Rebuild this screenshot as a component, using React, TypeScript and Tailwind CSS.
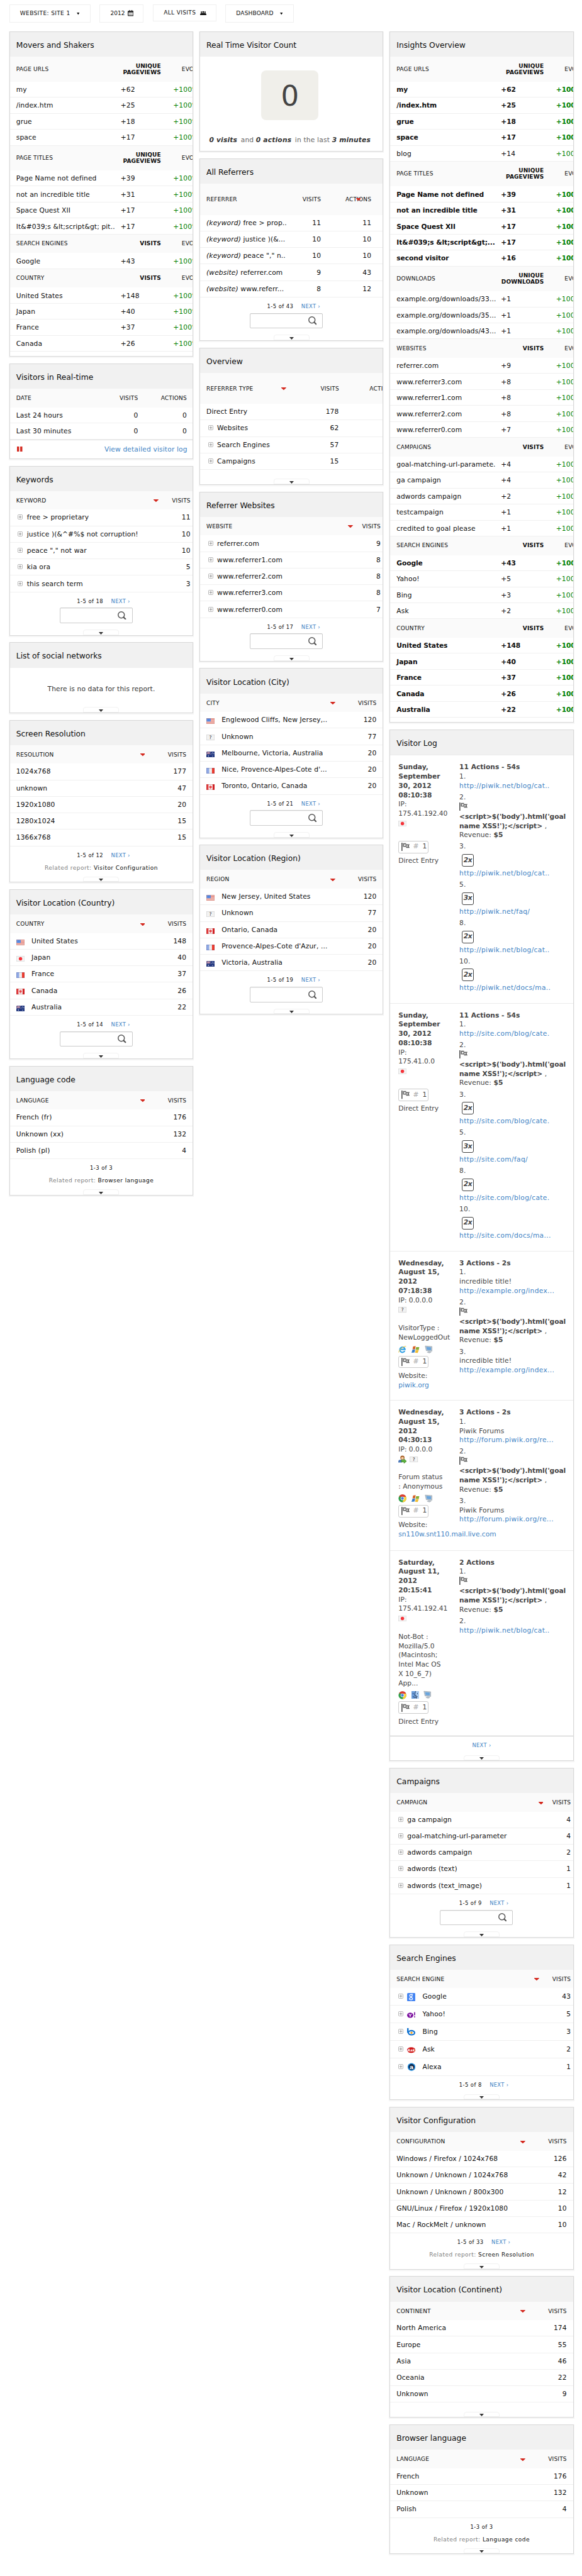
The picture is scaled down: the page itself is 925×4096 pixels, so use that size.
import React from "react";

type Bold = 0 | 1;

function Card({ title, children }: { title: string; children: React.ReactNode }) {
  return (
    <section className="relative w-[292.4px] overflow-hidden border border-[#d8d8d8] bg-white shadow-[0_1px_1px_1px_rgba(0,0,0,0.04)]">
      <h2 className="flex h-[39.24px] items-center bg-[#f1f1f1] pt-[3px] pl-[10px] text-[12.32px] leading-[16px] tracking-[-0.03px] whitespace-nowrap text-[#0d0d0d]">
        {title}
      </h2>
      {children}
    </section>
  );
}

function Tab() {
  return (
    <div className="absolute bottom-0 left-1/2 ml-[-28.5px] flex h-[8.5px] w-[57px] justify-center rounded-t-[4px] border border-[#f2f2f2] pt-[2.5px]">
      <svg className="h-[4px] w-[7px]" viewBox="0 0 7 4">
        <path d="M0 0h7L3.5 4z" fill="#333" />
      </svg>
    </div>
  );
}

function Arrow() {
  return (
    <svg className="h-[4.4px] w-[7.8px] shrink-0" viewBox="0 0 9 5">
      <path d="M0 0h9v.8L4.5 5 0 .8z" fill="#d4291f" />
    </svg>
  );
}

function Plus() {
  return (
    <svg className="mr-[6.4px] ml-[2.6px] h-[8px] w-[8px] shrink-0 -translate-y-[1px]" viewBox="0 0 9 9" fill="none" stroke="#aaa">
      <rect x=".5" y=".5" width="8" height="8" rx="1.5" />
      <path d="M2 4.5h5M4.5 2v5" stroke="#888" />
    </svg>
  );
}

function Flag({ code }: { code: string }) {
  return (
    <svg className="h-[9.2px] w-[13.2px] shrink-0" viewBox="0 0 16 11">
      {code === "us" && (
        <g>
          <rect width="16" height="11" fill="#f6f0ee" />
          <path d="M0 .8h16M0 3h16M0 5.3h16M0 7.6h16M0 10h16" stroke="#e0584c" strokeWidth="1.1" />
          <rect width="8.5" height="6.2" fill="#3f78dc" />
          <path d="M1 1.8h7M1 4.2h7" stroke="#c8dafa" strokeWidth=".9" strokeDasharray="1 1" />
          <rect x=".5" y=".5" width="15" height="10" fill="none" stroke="#c98a80" strokeOpacity=".6" />
        </g>
      )}
      {code === "jp" && (
        <g>
          <rect x=".5" y=".5" width="15" height="10" fill="#f4f4f4" stroke="#dcdcdc" />
          <circle cx="8" cy="5.5" r="3.3" fill="#f5333a" />
        </g>
      )}
      {code === "fr" && (
        <g>
          <rect width="16" height="11" fill="#eeeeee" />
          <rect width="5.4" height="11" fill="#8fa9e6" />
          <rect x="10.8" width="5.2" height="11" fill="#ee3a2c" />
          <rect x=".5" y=".5" width="15" height="10" fill="none" stroke="#444c88" strokeOpacity=".35" />
        </g>
      )}
      {code === "ca" && (
        <g>
          <rect width="16" height="11" fill="#f4f0f0" />
          <rect width="4" height="11" fill="#e03a3c" />
          <rect x="12" width="4" height="11" fill="#d42225" />
          <path d="M8 2l1 1.5 1.6-.2-.5 2.2 1 .6L8.3 8v1h-.6V8L4.9 6.1l1-.6-.5-2.2L7 3.500z" fill="#e8484a" />
          <rect x=".5" y=".5" width="15" height="10" fill="none" stroke="#b02a2a" strokeOpacity=".4" />
        </g>
      )}
      {code === "au" && (
        <g>
          <rect width="16" height="11" fill="#22387f" />
          <path d="M0 0l8 5.5M8 0L0 5.5M4 0v5.5M0 2.7h8" stroke="#d8a0ac" strokeWidth="1.1" />
          <circle cx="4" cy="8.5" r="1" fill="#dfe4f5" />
          <path d="M12 1.5v1.5M10 4.5h1.5M13.5 4h1.5M12 8v1.5" stroke="#dfe4f5" strokeWidth="1.2" />
        </g>
      )}
      {code === "xx" && (
        <g>
          <rect x=".5" y=".5" width="15" height="10" fill="#f3f3f3" stroke="#d5d5d5" />
          <text x="8" y="9" fontSize="9" textAnchor="middle" fill="#222" fontFamily="DejaVu Sans">
            ?
          </text>
        </g>
      )}
    </svg>
  );
}

function Engine({ name }: { name: string }) {
  return (
    <svg className="mr-[11px] h-[13.2px] w-[13.2px] shrink-0" viewBox="0 0 16 16">
      {name === "Google" && (
        <g fill="none" stroke="#fff" strokeWidth="1.5">
          <rect width="16" height="16" rx="2" fill="#4585f2" stroke="none" />
          <circle cx="7.5" cy="5" r="2.3" />
          <path d="M8.5 2.7h2.5M8 7.3c-1 1 2.5 1.5 2.5 3.7 0 3-6 3-6 .3 0-2 2-2.5 4-2.3" />
        </g>
      )}
      {name === "Yahoo!" && (
        <g>
          <ellipse cx="6" cy="9" rx="6" ry="5" fill="#7b0f9e" />
          <path d="M3.5 6.5L6 9.5l2.5-3M6 9.5V12" stroke="#fff" strokeWidth="1.5" fill="none" />
          <path d="M14.5 3v6M14.5 11v2" stroke="#7b0f9e" strokeWidth="2" />
        </g>
      )}
      {name === "Bing" && (
        <g>
          <path d="M1.5 1v9" stroke="#1273d0" strokeWidth="3" />
          <ellipse cx="8.5" cy="10" rx="6" ry="4" fill="#fff" stroke="#1273d0" strokeWidth="2.6" />
          <circle cx="8.5" cy="10" r="2" fill="#f7a21b" />
        </g>
      )}
      {name === "Ask" && (
        <g>
          <ellipse cx="8" cy="9.5" rx="8" ry="5.5" fill="#cf1414" />
          <text x="8" y="12" fontSize="7" fontWeight="bold" fontStyle="italic" textAnchor="middle" fill="#fff" fontFamily="DejaVu Sans">
            Ask
          </text>
        </g>
      )}
      {name === "Alexa" && (
        <g>
          <circle cx="8.5" cy="8" r="7.5" fill="#1f87d6" />
          <circle cx="8.5" cy="8" r="5.5" fill="#0b2346" />
          <text x="8.5" y="12" fontSize="11" fontWeight="bold" textAnchor="middle" fill="#fff" fontFamily="DejaVu Sans">
            a
          </text>
        </g>
      )}
    </svg>
  );
}

/* ---------- insights style tables ---------- */

type Group = { head: string; metric: string[]; rows: [string, string, Bold?][] };

function Insights({ groups, wide }: { groups: Group[]; wide?: boolean }) {
  return (
    <div className="pb-[7.2px] whitespace-nowrap">
      {groups.map((g) => (
        <div key={g.head}>
          <div
            className={
              "flex items-center bg-[#fafafa] pt-[1px] pl-[10px] text-[9.04px] leading-[9.86px] tracking-[0.15px] text-[#0d0d0d] uppercase " +
              (g.metric.length > 1 ? "h-[39.42px]" : "h-[29.56px]")
            }
          >
            <div className="w-[120px] shrink-0">{g.head}</div>
            <div className={"shrink-0 text-right font-bold tracking-[0.1px] " + (wide ? "w-[114px]" : "w-[110px]")}>
              {g.metric.map((m) => (
                <div key={m}>{m}</div>
              ))}
            </div>
            <div className="shrink-0 pl-[33px]">Evolution</div>
          </div>
          {g.rows.map(([label, value, bold]) => (
            <div
              key={label}
              className={
                "flex h-[25.46px] items-center border-b border-[#f0f0f0] pt-[2px] pl-[10px] text-[10.68px] leading-[14px] " +
                (bold ? "font-bold tracking-[-0.1px]" : "tracking-[0.12px]")
              }
            >
              <div className="w-[166px] shrink-0 text-[#0d0d0d]">{label}</div>
              <div className={"shrink-0 text-[#0d0d0d] " + (wide ? "w-[87.5px]" : "w-[83.5px]")}>{value}</div>
              <div className="shrink-0 text-[#008000]">+100%</div>
            </div>
          ))}
        </div>
      ))}
    </div>
  );
}

/* ---------- plain report tables ---------- */

type Row = { label: React.ReactNode; value: string; icon?: string; plus?: boolean };

function Report({
  head,
  rows,
  tight,
  arrowGap = "mr-[36.5px]",
}: {
  head: string;
  rows: Row[];
  tight?: boolean;
  arrowGap?: string;
}) {
  return (
    <div className="whitespace-nowrap text-[#0d0d0d]">
      <div className={"flex h-[29.56px] items-center bg-[#fafafa] pt-[2px] pl-[10px] text-[9.04px] tracking-[0.15px] uppercase " + (tight ? "pr-[3.5px]" : "pr-[10px]")}>
        <div className="flex-1">{head}</div>
        <div className={arrowGap}>
          <Arrow />
        </div>
        <div>Visits</div>
      </div>
      {rows.map((r, i) => (
        <div
          key={i}
          className={
            "flex items-center border-b border-[#f0f0f0] pt-[1px] pl-[10px] text-[10.68px] leading-[14px] tracking-[0.12px] " +
            (tight ? "pr-[3.5px] " : "pr-[10px] ") +
            (r.plus && r.icon ? "h-[27.92px]" : "h-[26.28px]")
          }
        >
          {r.plus && <Plus />}
          {r.icon && !r.plus && (
            <div className="mr-[11px] pt-[3px]">
              <Flag code={r.icon} />
            </div>
          )}
          {r.icon && r.plus && <Engine name={r.icon} />}
          <div className="flex-1">{r.label}</div>
          <div>{r.value}</div>
        </div>
      ))}
    </div>
  );
}

function Pager({ text, next = true }: { text: string; next?: boolean }) {
  return (
    <div className={"flex h-[28px] items-center justify-center text-[8.4px] leading-[10px] " + (next ? "pl-[7px]" : "")}>
      <span className="tracking-[0.45px] text-[#0d0d0d]">{text}</span>
      {next && <span className="ml-[12.5px] tracking-[0.3px] text-[#4183c4] uppercase">Next ›</span>}
    </div>
  );
}

function SearchFooter({ text }: { text: string }) {
  return (
    <div className="h-[68px]">
      <Pager text={text} />
      <div className="mt-[-3.3px] ml-[79px] flex h-[24.6px] w-[115.8px] items-center justify-end rounded-[2px] border border-[#ccc] pr-[9px] shadow-[inset_0_1px_1px_rgba(0,0,0,0.06)]">
        <svg className="h-[13.2px] w-[13.2px]" viewBox="0 0 16 16" fill="none" stroke="#555">
          <circle cx="7" cy="7" r="6" strokeWidth="1.8" />
          <path d="M11.5 11.5l3.5 3.5" strokeWidth="2.6" strokeLinecap="round" />
        </svg>
      </div>
      <Tab />
    </div>
  );
}

function RelatedFooter({ text, next, related }: { text: string; next?: boolean; related: string }) {
  return (
    <div className="h-[56.5px]">
      <Pager text={text} next={!!next} />
      <div className="-mt-[1px] text-center text-[9.04px] leading-[14px] tracking-[0.45px] text-[#808080]">
        Related report: <span className="text-[#0d0d0d]">{related}</span>
      </div>
      <Tab />
    </div>
  );
}

/* ---------- visitor log ---------- */

function GoalIcon() {
  return (
    <svg className="h-[13.2px] w-[13.2px] shrink-0" viewBox="0 0 16 16">
      <path d="M0 0h2v16H0z" fill="#555" />
      <path d="M3 1h6v2h7l-2 3.5 2 3.5H9V8H3z" fill="#666" />
      <path d="M5 3h3v3H5zM10 5h2v3h-2z" fill="#fff" />
    </svg>
  );
}

function Chrome() {
  return (
    <svg className="h-[13.2px] w-[13.2px]" viewBox="0 0 16 16">
      <circle cx="8" cy="8" r="7.5" fill="#2e9e48" />
      <path d="M1.5 4.2A7.5 7.5 0 0 1 15 5H8z" fill="#df3b2e" />
      <path d="M15 5a7.5 7.5 0 0 1-7 10.5L11 8 8 5z" fill="#fbd03c" />
      <circle cx="8" cy="8" r="3.5" fill="#fff" />
      <circle cx="8" cy="8" r="2.7" fill="#4a83dc" />
    </svg>
  );
}

function Explorer() {
  return (
    <svg className="h-[13.2px] w-[13.2px]" viewBox="0 0 16 16" fill="none">
      <path d="M12.5 11A5 5 0 1 1 13 8H4" stroke="#36a3e6" strokeWidth="2.6" />
      <path d="M1 14c-1-3 7-12 14-12" stroke="#f2c230" strokeWidth="1.2" />
    </svg>
  );
}

function WindowsLogo() {
  return (
    <svg className="h-[12px] w-[13.2px]" viewBox="0 0 16 14">
      <path d="M3 1l5-1-1 6-5 .5z" fill="#d8632b" />
      <path d="M9 2l6 0-1 5.5-6-.5z" fill="#86ad35" />
      <path d="M2 7l5-.5-1 6-6 .5z" fill="#3b7fc8" />
      <path d="M8 7.5l6 .5-2 5.5-5-.5z" fill="#f0bd33" />
    </svg>
  );
}

function Finder() {
  return (
    <svg className="h-[12px] w-[12px]" viewBox="0 0 14 14">
      <rect width="14" height="14" fill="#6b9ddb" />
      <rect x="7.5" width="6.5" height="14" fill="#a8caef" />
      <path d="M8 0C6 4 6 7 6 8h2.500c0 2 .3 4 .8 6M3 3.5v2M11 3.5v2M2.5 10c3 2 6 2 9 0" stroke="#14284b" fill="none" />
    </svg>
  );
}

function Screen() {
  return (
    <svg className="h-[14px] w-[13.2px]" viewBox="0 0 16 16">
      <path d="M1 1l13 1v9l-11-1z" fill="#c3ccd4" stroke="#8d98a3" strokeWidth=".8" />
      <path d="M2.8 2.500l9.500.8v6l-8-.6z" fill="#6aa5dc" />
      <path d="M7 11l4 .3 2 2.2-4 1.5-5-1.500z" fill="#b4bcc4" />
    </svg>
  );
}

function UserIcon() {
  return (
    <svg className="h-[13.2px] w-[13.2px]" viewBox="0 0 16 16">
      <circle cx="8" cy="4.5" r="4" fill="#a65f28" />
      <circle cx="8" cy="5.5" r="2.5" fill="#f7cfa4" />
      <path d="M0 13c0-4 3-5 7-4v5H0z" fill="#4d79b8" />
      <path d="M6 9h5V7l5 4.5-5 4V13H6z" fill="#5bb23c" stroke="#2f7b1e" strokeWidth=".7" />
    </svg>
  );
}

function GoalBox() {
  return (
    <div className="mb-[5.5px] flex h-[19.7px] w-[47.5px] items-center rounded-[3px] border border-[#ccc] pl-[4px]">
      <GoalIcon />
      <span className="ml-[5px] text-[#aaa]">#</span>
      <span className="ml-[6px]">1</span>
    </div>
  );
}

const Link = ({ children }: { children: React.ReactNode }) => <div className="text-[#4183c4]">{children}</div>;

type Action =
  | { n: string; kind: "link"; title?: string; url: string; times?: string }
  | { n: string; kind: "goal" };

function Actions({ title, items }: { title: string; items: Action[] }) {
  return (
    <div>
      <div className="font-bold">{title}</div>
      {items.map((a) => (
        <div key={a.n} className="mb-[3.3px]">
          <div className="tracking-[0.2px]">{a.n}.</div>
          {a.kind === "goal" ? (
            <div>
              <div className="flex h-[16px]">
                <GoalIcon />
              </div>
              <div className="font-bold tracking-[-0.07px]">
                <div>{"<script>$('body').html('goal"}</div>
                <div>
                  {"name XSS!');</script>"} <span className="font-normal">,</span>
                </div>
              </div>
              <div className="tracking-[0.1px]">
                Revenue: <b>$5</b>
              </div>
            </div>
          ) : (
            <div>
              {a.times && (
                <div className="flex h-[27.9px] items-center pl-[4px]">
                  <span className="flex h-[20px] w-[19px] items-center justify-center rounded-[3px] border border-[#444] font-bold tracking-[-0.3px] italic">
                    {a.times}
                  </span>
                </div>
              )}
              {a.title && <div className="tracking-[0.12px]">{a.title}</div>}
              <div className="tracking-[0.32px]">
                <Link>{a.url}</Link>
              </div>
            </div>
          )}
        </div>
      ))}
    </div>
  );
}

function Entry({
  height,
  date,
  ip,
  badges,
  extra,
  icons,
  source,
  children,
}: {
  height: string;
  date: string[];
  ip: string[];
  badges: React.ReactNode;
  extra?: string[];
  icons?: React.ReactNode;
  source: React.ReactNode;
  children: React.ReactNode;
}) {
  return (
    <div className={"flex border-t border-[#ececec] pt-[12px] pl-[13px] text-[10.68px] leading-[14.78px] whitespace-nowrap text-[#444] " + height}>
      <div className="w-[96.8px] shrink-0">
        <div className="font-bold">
          {date.map((d) => (
            <div key={d}>{d}</div>
          ))}
        </div>
        {ip.map((d) => (
          <div key={d}>{d}</div>
        ))}
        <div className="flex h-[15px] items-center gap-[5px]">{badges}</div>
        {extra ? (
          <div className="pt-[14.5px]">
            {extra.map((d) => (
              <div key={d}>{d}</div>
            ))}
            <div className="flex h-[21px] items-center gap-[7.5px] pt-[1px]">{icons}</div>
          </div>
        ) : (
          <div className="h-[20px]" />
        )}
        <GoalBox />
        {source}
      </div>
      {children}
    </div>
  );
}

const sundayActions = (a: string, b: string, c: string): Action[] => [
  { n: "1", kind: "link", url: a },
  { n: "2", kind: "goal" },
  { n: "3", kind: "link", url: a, times: "2x" },
  { n: "5", kind: "link", url: b, times: "3x" },
  { n: "8", kind: "link", url: a, times: "2x" },
  { n: "10", kind: "link", url: c, times: "2x" },
];

const titledActions = (title: string, url: string): Action[] => [
  { n: "1", kind: "link", title, url },
  { n: "2", kind: "goal" },
  { n: "3", kind: "link", title, url },
];

function VisitorLog() {
  return (
    <Card title="Visitor Log">
      <Entry
        height="h-[394.18px]"
        date={["Sunday,", "September", "30, 2012", "08:10:38"]}
        ip={["IP:", "175.41.192.40"]}
        badges={<Flag code="jp" />}
        source="Direct Entry"
      >
        <Actions title="11 Actions - 54s" items={sundayActions("http://piwik.net/blog/cat..", "http://piwik.net/faq/", "http://piwik.net/docs/ma..")} />
      </Entry>
      <Entry
        height="h-[394.18px]"
        date={["Sunday,", "September", "30, 2012", "08:10:38"]}
        ip={["IP:", "175.41.0.0"]}
        badges={<Flag code="jp" />}
        source="Direct Entry"
      >
        <Actions title="11 Actions - 54s" items={sundayActions("http://site.com/blog/cate.", "http://site.com/faq/", "http://site.com/docs/ma...")} />
      </Entry>
      <Entry
        height="h-[237.3px]"
        date={["Wednesday,", "August 15,", "2012", "07:18:38"]}
        ip={["IP: 0.0.0.0"]}
        badges={<Flag code="xx" />}
        extra={["VisitorType :", "NewLoggedOut"]}
        icons={
          <>
            <Explorer />
            <WindowsLogo />
            <Screen />
          </>
        }
        source={
          <>
            Website:
            <Link>piwik.org</Link>
          </>
        }
      >
        <Actions title="3 Actions - 2s" items={titledActions("incredible title!", "http://example.org/index...")} />
      </Entry>
      <Entry
        height="h-[238.6px]"
        date={["Wednesday,", "August 15,", "2012", "04:30:13"]}
        ip={["IP: 0.0.0.0"]}
        badges={
          <>
            <UserIcon />
            <Flag code="xx" />
          </>
        }
        extra={["Forum status", ": Anonymous"]}
        icons={
          <>
            <Chrome />
            <WindowsLogo />
            <Screen />
          </>
        }
        source={
          <>
            Website:
            <Link>sn110w.snt110.mail.live.com</Link>
          </>
        }
      >
        <Actions title="3 Actions - 2s" items={titledActions("Piwik Forums", "http://forum.piwik.org/re...")} />
      </Entry>
      <Entry
        height="h-[296.9px]"
        date={["Saturday,", "August 11,", "2012", "20:15:41"]}
        ip={["IP:", "175.41.192.41"]}
        badges={<Flag code="jp" />}
        extra={["Not-Bot :", "Mozilla/5.0", "(Macintosh;", "Intel Mac OS", "X 10_6_7)", "App..."]}
        icons={
          <>
            <Chrome />
            <Finder />
            <Screen />
          </>
        }
        source="Direct Entry"
      >
        <Actions
          title="2 Actions"
          items={[
            { n: "1", kind: "goal" },
            { n: "2", kind: "link", url: "http://piwik.net/blog/cat.." },
          ]}
        />
      </Entry>
      <div className="h-[37.6px] shadow-[0_-1px_1px_#ccc]">
        <div className="flex h-[28px] items-center justify-center text-[8.4px] tracking-[0.3px] text-[#4183c4] uppercase">Next ›</div>
        <Tab />
      </div>
    </Card>
  );
}

/* ---------- data ---------- */

const UPV = ["Unique", "Pageviews"];

const movers: Group[] = [
  { head: "Page URLs", metric: UPV, rows: [["my", "+62"], ["/index.htm", "+25"], ["grue", "+18"], ["space", "+17"]] },
  {
    head: "Page Titles",
    metric: UPV,
    rows: [["Page Name not defined", "+39"], ["not an incredible title", "+31"], ["Space Quest XII", "+17"], ["It&#039;s &lt;script&gt; pit..", "+17"]],
  },
  { head: "Search Engines", metric: ["Visits"], rows: [["Google", "+43"]] },
  { head: "Country", metric: ["Visits"], rows: [["United States", "+148"], ["Japan", "+40"], ["France", "+37"], ["Canada", "+26"]] },
];

const insights: Group[] = [
  { head: "Page URLs", metric: UPV, rows: [["my", "+62", 1], ["/index.htm", "+25", 1], ["grue", "+18", 1], ["space", "+17", 1], ["blog", "+14"]] },
  {
    head: "Page Titles",
    metric: UPV,
    rows: [
      ["Page Name not defined", "+39", 1],
      ["not an incredible title", "+31", 1],
      ["Space Quest XII", "+17", 1],
      ["It&#039;s &lt;script&gt;...", "+17", 1],
      ["second visitor", "+16", 1],
    ],
  },
  {
    head: "Downloads",
    metric: ["Unique", "Downloads"],
    rows: [["example.org/downloads/33...", "+1"], ["example.org/downloads/35...", "+1"], ["example.org/downloads/43...", "+1"]],
  },
  {
    head: "Websites",
    metric: ["Visits"],
    rows: [["referrer.com", "+9"], ["www.referrer3.com", "+8"], ["www.referrer1.com", "+8"], ["www.referrer2.com", "+8"], ["www.referrer0.com", "+7"]],
  },
  {
    head: "Campaigns",
    metric: ["Visits"],
    rows: [["goal-matching-url-paramete.", "+4"], ["ga campaign", "+4"], ["adwords campaign", "+2"], ["testcampaign", "+1"], ["credited to goal please", "+1"]],
  },
  { head: "Search Engines", metric: ["Visits"], rows: [["Google", "+43", 1], ["Yahoo!", "+5"], ["Bing", "+3"], ["Ask", "+2"]] },
  {
    head: "Country",
    metric: ["Visits"],
    rows: [["United States", "+148", 1], ["Japan", "+40", 1], ["France", "+37", 1], ["Canada", "+26", 1], ["Australia", "+22", 1]],
  },
];

const plain = (...rows: [string, string][]): Row[] => rows.map(([label, value]) => ({ label, value }));
const plus = (...rows: [string, string][]): Row[] => rows.map(([label, value]) => ({ label, value, plus: true }));
const flags = (...rows: [string, string, string][]): Row[] => rows.map(([icon, label, value]) => ({ icon, label, value }));
const engines = (...rows: [string, string][]): Row[] => rows.map(([label, value]) => ({ label, value, plus: true, icon: label }));

const referrers: [string, string, string, string][] = [
  ["(keyword)", "free > prop..", "11", "11"],
  ["(keyword)", "justice )(&...", "10", "10"],
  ["(keyword)", 'peace "," n..', "10", "10"],
  ["(website)", "referrer.com", "9", "43"],
  ["(website)", "www.referr...", "8", "12"],
];

const overview: [string, string][] = [
  ["Direct Entry", "178"],
  ["Websites", "62"],
  ["Search Engines", "57"],
  ["Campaigns", "15"],
];

const rowClass = "flex items-center border-b border-[#f0f0f0] pl-[10px] text-[10.68px] leading-[14px] tracking-[0.12px] text-[#0d0d0d] whitespace-nowrap ";
const headClass = "flex items-center bg-[#fafafa] pl-[10px] text-[9.04px] tracking-[0.15px] text-[#0d0d0d] uppercase whitespace-nowrap ";

function Caret() {
  return (
    <svg className="h-[3.5px] w-[4.5px] shrink-0" viewBox="0 0 5 4">
      <path d="M0 0h5L2.5 4z" fill="#0d0d0d" />
    </svg>
  );
}

function TopBar() {
  const box = "flex items-center border border-[#f0f0f0] text-[9.04px] text-[#0d0d0d] uppercase whitespace-nowrap pt-[2px] pl-[16px] ";
  return (
    <div className="flex h-[50.1px] items-start gap-[14.7px] pt-[6.5px]">
      <div className={box + "h-[29px] w-[129px] tracking-[0.35px]"}>
        <span className="w-[90px] shrink-0">Website: site 1</span>
        <Caret />
      </div>
      <div className={box + "h-[29px] w-[70px]"}>
        <span className="w-[27.5px] shrink-0">2012</span>
        <svg className="h-[9.5px] w-[9.5px] shrink-0 -translate-y-[1px]" viewBox="0 0 12 12">
          <path d="M1 1.5h2V0h1.5v1.5h3V0H9v1.5h2l1 1V11l-1 1H1l-1-1V2.5z" fill="#1a1a1a" />
          <path d="M1.5 4.5h9v6h-9z" fill="#fff" />
          <path d="M2.5 6h7M2.5 9h7" stroke="#1a1a1a" strokeWidth="1.2" strokeDasharray="1.5 1.2" />
        </svg>
      </div>
      <div className={box + "h-[27.5px] w-[100.5px] tracking-[0.35px]"}>
        <span className="w-[57.5px] shrink-0">All visits</span>
        <svg className="h-[7px] w-[10px] shrink-0 -translate-y-[0.5px]" viewBox="0 0 12 8">
          <circle cx="6" cy="1.7" r="1.7" fill="#0d0d0d" />
          <circle cx="2.5" cy="2.2" r="1.4" fill="#0d0d0d" />
          <circle cx="9.5" cy="2.2" r="1.4" fill="#0d0d0d" />
          <path d="M0 7.5C0 4.5 1 4 3 4l3-.5L9 4c2 0 3 .5 3 3.500z" fill="#0d0d0d" />
        </svg>
      </div>
      <div className={box + "h-[29px] w-[108.5px] tracking-[0.15px]"}>
        <span className="w-[69.5px] shrink-0">Dashboard</span>
        <Caret />
      </div>
    </div>
  );
}

export default function App() {
  return (
    <div className="h-[4096px] w-[925px] overflow-hidden bg-white pl-[14.8px] font-['DejaVu_Sans',Verdana,sans-serif]">
      <TopBar />
      <div className="flex items-start gap-[9.86px]">
        <div className="flex flex-col gap-[10.68px]">
          <Card title="Movers and Shakers">
            <Insights groups={movers} />
          </Card>

          <Card title="Visitors in Real-time">
            <div className={headClass + "h-[29.56px] pt-[2px]"}>
              <div className="w-[100px]">Date</div>
              <div className="w-[93.5px] text-right">Visits</div>
              <div className="w-[77.5px] text-right">Actions</div>
            </div>
            {["Last 24 hours", "Last 30 minutes"].map((l) => (
              <div key={l} className={rowClass + "h-[25.46px] pt-[2px]"}>
                <div className="w-[100px]">{l}</div>
                <div className="w-[93.5px] text-right">0</div>
                <div className="w-[77.5px] text-right">0</div>
              </div>
            ))}
            <div className="flex h-[30.2px] items-center justify-between border-t border-[#e0e0e0] pt-[1px] pr-[8.5px] pl-[11.5px] text-[10.68px] tracking-[0.15px] text-[#4183c4]">
              <svg className="h-[8.5px] w-[8.5px] -translate-y-[1px]" viewBox="0 0 10 10">
                <path d="M0 0h4v10H0zM6 0h4v10H6z" fill="#d4291f" />
              </svg>
              <span>View detailed visitor log</span>
            </div>
          </Card>

          <Card title="Keywords">
            <Report
              head="Keyword"
              tight
              arrowGap="mr-[21.3px]"
              rows={plus(["free > proprietary", "11"], ["justice )(&^#%$ not corruption!", "10"], ['peace "," not war', "10"], ["kia ora", "5"], ["this search term", "3"])}
            />
            <SearchFooter text="1-5 of 18" />
          </Card>

          <Card title="List of social networks">
            <div className="h-[71.3px] pt-[26px] text-center text-[10.68px] leading-[16px] tracking-[0.12px] text-[#333]">There is no data for this report.</div>
            <Tab />
          </Card>

          <Card title="Screen Resolution">
            <Report head="Resolution" rows={plain(["1024x768", "177"], ["unknown", "47"], ["1920x1080", "20"], ["1280x1024", "15"], ["1366x768", "15"])} />
            <RelatedFooter text="1-5 of 12" next related="Visitor Configuration" />
          </Card>

          <Card title="Visitor Location (Country)">
            <Report
              head="Country"
              rows={flags(["us", "United States", "148"], ["jp", "Japan", "40"], ["fr", "France", "37"], ["ca", "Canada", "26"], ["au", "Australia", "22"])}
            />
            <SearchFooter text="1-5 of 14" />
          </Card>

          <Card title="Language code">
            <Report head="Language" rows={plain(["French (fr)", "176"], ["Unknown (xx)", "132"], ["Polish (pl)", "4"])} />
            <RelatedFooter text="1-3 of 3" related="Browser language" />
          </Card>
        </div>

        <div className="flex flex-col gap-[10.68px]">
          <Card title="Real Time Visitor Count">
            <div className="flex h-[150.1px] flex-col items-center pt-[21.4px] pr-[5px]">
              <div className="flex h-[78.8px] w-[91.2px] items-center justify-center rounded-[8px] bg-[#f0efea] pt-[3px] text-[45px] text-[#444]">0</div>
              <div className="mt-[24.5px] text-[10.68px] leading-[16px] tracking-[0.18px] whitespace-nowrap text-[#666]">
                <b className="mr-[2px] text-[#333] italic">0 visits</b> and <b className="mr-[2px] text-[#333] italic">0 actions</b> in the last{" "}
                <b className="text-[#333] italic">3 minutes</b>
              </div>
            </div>
          </Card>

          <Card title="All Referrers">
            <div className={headClass + "relative h-[49.27px] pt-[2px]"}>
              <div className="w-[120px]">Referrer</div>
              <div className="w-[62px] text-right">Visits</div>
              <div className="w-[80px] text-right">Actions</div>
              <div className="absolute top-[22.8px] left-[247.5px] leading-none">
                <Arrow />
              </div>
            </div>
            {referrers.map(([kind, label, v, a]) => (
              <div key={label} className={rowClass + "h-[26.28px] pt-[1px]"}>
                <div className="w-[140px]">
                  <i>{kind}</i> {label}
                </div>
                <div className="w-[42px] text-right">{v}</div>
                <div className="w-[80px] text-right">{a}</div>
              </div>
            ))}
            <SearchFooter text="1-5 of 43" />
          </Card>

          <Card title="Overview">
            <div className={headClass + "h-[49.27px] pt-[2px]"}>
              <div className="w-[119px] shrink-0">Referrer type</div>
              <Arrow />
              <div className="w-[84px] shrink-0 text-right">Visits</div>
              <div className="shrink-0 pl-[48.5px]">Actions</div>
            </div>
            {overview.map(([label, v], i) => (
              <div key={label} className={rowClass + "h-[26.28px] pt-[1px] pr-[70px]"}>
                {i > 0 && <Plus />}
                <div className="flex-1">{label}</div>
                <div>{v}</div>
              </div>
            ))}
            <div className="h-[22.8px]" />
            <Tab />
          </Card>

          <Card title="Referrer Websites">
            <Report
              head="Website"
              tight
              arrowGap="mr-[14.5px]"
              rows={plus(["referrer.com", "9"], ["www.referrer1.com", "8"], ["www.referrer2.com", "8"], ["www.referrer3.com", "8"], ["www.referrer0.com", "7"])}
            />
            <SearchFooter text="1-5 of 17" />
          </Card>

          <Card title="Visitor Location (City)">
            <Report
              head="City"
              rows={flags(
                ["us", "Englewood Cliffs, New Jersey,..", "120"],
                ["xx", "Unknown", "77"],
                ["au", "Melbourne, Victoria, Australia", "20"],
                ["fr", "Nice, Provence-Alpes-Cote d'...", "20"],
                ["ca", "Toronto, Ontario, Canada", "20"],
              )}
            />
            <SearchFooter text="1-5 of 21" />
          </Card>

          <Card title="Visitor Location (Region)">
            <Report
              head="Region"
              rows={flags(
                ["us", "New Jersey, United States", "120"],
                ["xx", "Unknown", "77"],
                ["ca", "Ontario, Canada", "20"],
                ["fr", "Provence-Alpes-Cote d'Azur, ...", "20"],
                ["au", "Victoria, Australia", "20"],
              )}
            />
            <SearchFooter text="1-5 of 19" />
          </Card>
        </div>

        <div className="flex flex-col gap-[10.68px]">
          <Card title="Insights Overview">
            <Insights groups={insights} wide />
          </Card>

          <VisitorLog />

          <Card title="Campaigns">
            <Report
              head="Campaign"
              tight
              arrowGap="mr-[14.5px]"
              rows={plus(["ga campaign", "4"], ["goal-matching-url-parameter", "4"], ["adwords campaign", "2"], ["adwords (text)", "1"], ["adwords (text_image)", "1"])}
            />
            <SearchFooter text="1-5 of 9" />
          </Card>

          <Card title="Search Engines">
            <Report head="Search Engine" tight arrowGap="mr-[21.3px]" rows={engines(["Google", "43"], ["Yahoo!", "5"], ["Bing", "3"], ["Ask", "2"], ["Alexa", "1"])} />
            <div className="h-[37.6px]">
              <Pager text="1-5 of 8" />
              <Tab />
            </div>
          </Card>

          <Card title="Visitor Configuration">
            <Report
              head="Configuration"
              rows={plain(
                ["Windows / Firefox / 1024x768", "126"],
                ["Unknown / Unknown / 1024x768", "42"],
                ["Unknown / Unknown / 800x300", "12"],
                ["GNU/Linux / Firefox / 1920x1080", "10"],
                ["Mac / RockMelt / unknown", "10"],
              )}
            />
            <RelatedFooter text="1-5 of 33" next related="Screen Resolution" />
          </Card>

          <Card title="Visitor Location (Continent)">
            <Report head="Continent" rows={plain(["North America", "174"], ["Europe", "55"], ["Asia", "46"], ["Oceania", "22"], ["Unknown", "9"])} />
            <div className="h-[22.8px]" />
            <Tab />
          </Card>

          <Card title="Browser language">
            <Report head="Language" rows={plain(["French", "176"], ["Unknown", "132"], ["Polish", "4"])} />
            <RelatedFooter text="1-3 of 3" related="Language code" />
          </Card>
        </div>
      </div>
    </div>
  );
}
